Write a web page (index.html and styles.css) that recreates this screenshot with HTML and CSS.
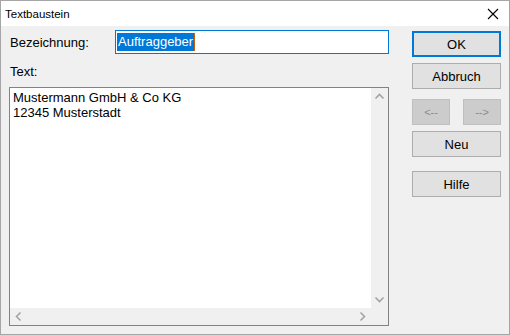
FILE: index.html
```html
<!DOCTYPE html>
<html lang="de">
<head>
    <meta charset="UTF-8" />
    <title>Textbaustein</title>
    <link rel="stylesheet" href="styles.css">
</head>
<body>
    <div class="window">
        <div class="titlebar">
            <span class="title">Textbaustein</span>
            <svg class="close" width="12" height="12" viewBox="0 0 12 12">
                <path d="M1 1 L11 11 M11 1 L1 11" stroke="#000" stroke-width="1.1" fill="none" />
            </svg>
        </div>
        <div class="dialog">
            <div class="main">
                <div class="name-row">
                    <label class="name-label">Bezeichnung:</label>
                    <div class="edit focused">
                        <span class="selection">Auftraggeber</span><span class="caret"></span>
                    </div>
                </div>
                <div class="text-label">Text:</div>
                <div class="memo">
                    <div class="memo-top">
                        <div class="memo-text">Mustermann GmbH &amp; Co KG<br>12345 Musterstadt</div>
                        <div class="vscroll">
                            <svg width="17" height="17" viewBox="0 0 17 17"><polyline points="4.5,10.5 8.5,6.5 12.5,10.5" class="chev" /></svg>
                            <svg width="17" height="17" viewBox="0 0 17 17"><polyline points="4.5,6.5 8.5,10.5 12.5,6.5" class="chev" /></svg>
                        </div>
                    </div>
                    <div class="memo-bottom">
                        <div class="hscroll">
                            <svg width="17" height="17" viewBox="0 0 17 17"><polyline points="10.5,4.5 6.5,8.5 10.5,12.5" class="chev" /></svg>
                            <svg width="17" height="17" viewBox="0 0 17 17"><polyline points="6.5,4.5 10.5,8.5 6.5,12.5" class="chev" /></svg>
                        </div>
                        <div class="corner"></div>
                    </div>
                </div>
            </div>
            <div class="buttons">
                <button class="btn default">OK</button>
                <button class="btn">Abbruch</button>
                <div class="nav-row">
                    <button class="btn small" disabled>&lt;--</button>
                    <button class="btn small" disabled>--&gt;</button>
                </div>
                <button class="btn">Neu</button>
                <button class="btn help">Hilfe</button>
            </div>
        </div>
    </div>
</body>
</html>
```

FILE: styles.css
```css
:root {
    --face: #f0f0f0;
    --accent: #0078d7;
    --btn-face: #e1e1e1;
    --btn-border: #adadad;
    --font: "Liberation Sans", Arial, sans-serif;
}

html, body {
    margin: 0;
    padding: 0;
    background: #fff;
}

.window {
    width: 510px;
    height: 335px;
    box-sizing: border-box;
    border: 1px solid #a6a6a6;
    background: var(--face);
    font-family: var(--font);
    font-size: 13px;
    color: #000;
    display: flex;
    flex-direction: column;
}

.titlebar {
    height: 25px;
    background: #fff;
    display: flex;
    align-items: center;
    justify-content: space-between;
    padding: 0 10px 0 4px;
    flex-shrink: 0;
}

.title {
    font-size: 11.5px;
    padding-top: 1px;
}

.close {
    display: block;
    margin-top: 1px;
}

.dialog {
    flex: 1;
    display: flex;
}

.main {
    width: 380px;
    padding: 4px 0 0 8px;
}

.name-row {
    display: flex;
    align-items: center;
    height: 24px;
}

.name-label {
    width: 106px;
    padding-left: 1px;
    box-sizing: border-box;
}

.edit {
    flex: 1;
    height: 24px;
    box-sizing: border-box;
    border: 1px solid #7a7a7a;
    background: #fff;
    padding: 2px 0 0 1px;
    display: flex;
    align-items: flex-start;
}

.edit.focused {
    border-color: var(--accent);
}

.selection {
    background: var(--accent);
    color: #fff;
    height: 18px;
    line-height: 18px;
    padding: 0 1px;
}

.caret {
    width: 1px;
    height: 18px;
    background: #c06010;
}

.text-label {
    margin-top: 10px;
    line-height: 15px;
    padding-left: 1px;
}

.memo {
    margin-top: 8px;
    height: 239px;
    box-sizing: border-box;
    border: 1px solid #828282;
    background: #fff;
    display: flex;
    flex-direction: column;
}

.memo-top {
    flex: 1;
    display: flex;
}

.memo-text {
    flex: 1;
    padding: 2px 0 0 3px;
    line-height: 15px;
}

.vscroll {
    width: 17px;
    background: var(--face);
    display: flex;
    flex-direction: column;
    justify-content: space-between;
}

.memo-bottom {
    height: 17px;
    display: flex;
}

.hscroll {
    flex: 1;
    background: var(--face);
    display: flex;
    justify-content: space-between;
}

.corner {
    width: 17px;
    background: var(--face);
}

.vscroll svg, .hscroll svg {
    display: block;
}

.chev {
    fill: none;
    stroke: #a3a3a3;
    stroke-width: 1.6;
}

.buttons {
    margin-left: 23px;
    padding-top: 5px;
    width: 89px;
    display: flex;
    flex-direction: column;
}

.btn {
    height: 26px;
    width: 89px;
    box-sizing: border-box;
    background: var(--btn-face);
    border: 1px solid var(--btn-border);
    font-family: var(--font);
    font-size: 13px;
    color: #000;
    padding: 0;
    margin: 0 0 6px 0;
}

.btn.default {
    border: 2px solid var(--accent);
}

.btn:disabled {
    background: #cccccc;
    border-color: #bfbfbf;
    color: #8a8a8a;
    font-size: 11px;
}

.nav-row {
    display: flex;
    justify-content: space-between;
    margin-top: 4px;
}

.btn.small {
    width: 38px;
}

.btn.help {
    margin-top: 8px;
}
```
